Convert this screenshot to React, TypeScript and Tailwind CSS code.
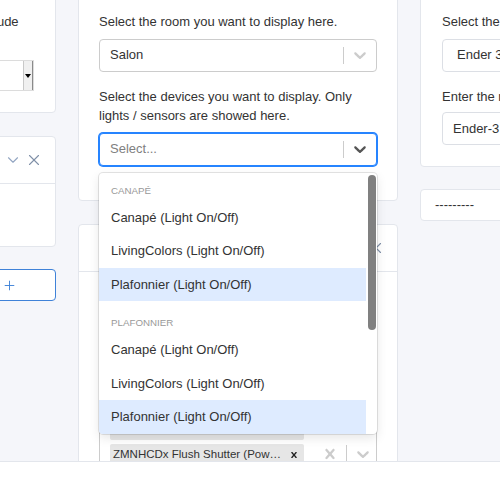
import { ChevronDown, X, Plus } from 'lucide-react';

const chevronPath =
  'M4.516 7.548c0.436-0.446 1.043-0.481 1.576 0l3.908 3.747 3.908-3.747c0.533-0.481 1.141-0.446 1.574 0 0.436 0.445 0.408 1.197 0 1.615-0.406 0.418-4.695 4.502-4.695 4.502-0.217 0.223-0.502 0.335-0.787 0.335s-0.57-0.112-0.789-0.335c0 0-4.287-4.084-4.695-4.502s-0.436-1.17 0-1.615z';
const crossPath =
  'M14.348 14.849c-0.469 0.469-1.229 0.469-1.697 0l-2.651-3.030-2.651 3.029c-0.469 0.469-1.229 0.469-1.697 0-0.469-0.469-0.469-1.229 0-1.697l2.758-3.15-2.759-3.152c-0.469-0.469-0.469-1.228 0-1.697s1.228-0.469 1.697 0l2.652 3.031 2.651-3.031c0.469-0.469 1.228-0.469 1.697 0s0.469 1.229 0 1.697l-2.758 3.152 2.758 3.15c0.469 0.469 0.469 1.229 0 1.698z';

function Glyph({ d, size = 20, className }: { d: string; size?: number; className?: string }) {
  return (
    <svg width={size} height={size} viewBox="0 0 20 20" className={className} fill="currentColor">
      <path d={d} />
    </svg>
  );
}

const groups = [
  { label: 'Canapé', options: ['Canapé (Light On/Off)', 'LivingColors (Light On/Off)', 'Plafonnier (Light On/Off)'] },
  { label: 'Plafonnier', options: ['Canapé (Light On/Off)', 'LivingColors (Light On/Off)', 'Plafonnier (Light On/Off)'] },
];

const selectedDevices = [
  'Canapé (Light On/Off)',
  'LivingColors (Light On/Off)',
  'Plafonnier (Light On/Off)',
  'Température Salon (Sensor)',
  'Humidité Salon (Sensor)',
  'Fibaro Motion Sensor (Motion)',
  'ZMNHCDx Flush Shutter (Power meter)',
];

function Card({ className = '', children }: { className?: string; children: React.ReactNode }) {
  return <div className={`rounded-[4px] border border-[#e3e6ec] bg-white ${className}`}>{children}</div>;
}

function SingleSelect({ value, focused = false }: { value?: string; focused?: boolean }) {
  return (
    <div
      className={`flex h-[33px] items-center rounded-[4px] bg-white ${
        focused ? 'border border-[#2684ff] shadow-[0_0_0_1px_#2684ff]' : 'border border-[#cccccc]'
      }`}
    >
      <div className="flex-1 pl-[10px]">
        {value ? <span className="text-[#333]">{value}</span> : <span className="text-[#808080]">Select...</span>}
      </div>
      <span className="h-[17px] w-px bg-[#cccccc]" />
      <div className={`flex w-[32px] justify-center ${focused ? 'text-[#555]' : 'text-[#cccccc]'}`}>
        <Glyph d={chevronPath} />
      </div>
    </div>
  );
}

function DeviceMenu() {
  return (
    <div className="absolute left-0 right-0 top-full z-10 mt-[7px] flex h-[261px] overflow-hidden rounded-[4px] bg-white shadow-[0_0_0_1px_rgba(0,0,0,0.1),0_4px_11px_rgba(0,0,0,0.1)]">
      <div className="flex-1 pt-[4px]">
        {groups.map((g) => (
          <div key={g.label} className="py-[8px]">
            <div className="mb-[4px] h-[12px] px-[12px] text-[9.75px] leading-[12px] font-medium uppercase text-[#999]">
              {g.label}
            </div>
            {g.options.map((o, i) => (
              <div
                key={o}
                className={`flex h-[33.5px] items-center px-[12px] text-[#333] ${i === 2 ? 'bg-[#deebff]' : ''}`}
              >
                {o}
              </div>
            ))}
          </div>
        ))}
      </div>
      <div className="w-[11px] pl-[2px] pt-[2px]">
        <div className="h-[155px] w-[8px] rounded-full bg-[#808080]" />
      </div>
    </div>
  );
}

function CardHeader() {
  return (
    <div className="flex h-[47px] items-center justify-end gap-[3px] border-b border-[#e3e6ec] pr-[12px]">
      <ChevronDown size={18} strokeWidth={1.5} className="text-[#93a6c2]" />
      <X size={18} strokeWidth={1.5} className="text-[#7f90a8]" />
    </div>
  );
}

export default function App() {
  return (
    <div className="flex h-[500px] w-[500px] flex-col overflow-hidden bg-[#f5f6fa] font-['Liberation_Sans',Arial,sans-serif] text-[13px] leading-[1.5] text-[#333]">
      <main className="flex-1 overflow-hidden">
        <div className="-mt-[10px] ml-[-264px] flex items-start gap-[22px]">
          {/* location column */}
          <div className="flex w-[320px] shrink-0 flex-col">
            <Card className="px-[20px] pb-[21px] pt-[21px]">
              <p>Select the city you want to use for the latitude and longitude.</p>
              <div className="mt-[9px] flex h-[31px] w-[277px] border border-[#dcdcdc] bg-white">
                <div className="flex-1 pl-[6px] leading-[29px]">Paris</div>
                <div className="flex w-[10px] items-center justify-center border-l border-r border-l-[#c8c8c8] border-r-[#8a8a8a] bg-[#f0f0f0]">
                  <span className="h-0 w-0 border-x-[3px] border-t-[4px] border-x-transparent border-t-black" />
                </div>
              </div>
            </Card>
            <Card className="mt-[23px]">
              <CardHeader />
              <div className="h-[62px]" />
            </Card>
            <button className="mt-[22px] flex h-[32px] items-center justify-end rounded-[4px] border border-[#3f82d8] bg-white pr-[38px] text-[#3f82d8]">
              <Plus size={15} strokeWidth={1.5} />
            </button>
          </div>

          {/* room column */}
          <div className="flex w-[320px] shrink-0 flex-col">
            <Card className="px-[20px] pb-[34px] pt-[21px]">
              <p>Select the room you want to display here.</p>
              <div className="mt-[7px]">
                <SingleSelect value="Salon" />
              </div>
              <p className="mt-[15px]">Select the devices you want to display. Only lights / sensors are showed here.</p>
              <div className="relative mt-[7px]">
                <SingleSelect focused />
                <DeviceMenu />
              </div>
            </Card>
            <Card className="mt-[23px] h-[300px]">
              <CardHeader />
              <div className="px-[20px] pt-[11px]">
                <div className="flex rounded-[4px] border border-[#cccccc] bg-white">
                  <div className="flex flex-1 flex-wrap px-[8px] py-[2px]">
                    {selectedDevices.map((d) => (
                      <div key={d} className="m-[2px] flex h-[22px] w-[194px] items-center rounded-[2px] bg-[#e6e6e6]">
                        <span className="flex-1 truncate pl-[3px] text-[11.5px] text-[#333]">{d}</span>
                        <span className="flex w-[20px] justify-center text-[#222]">
                          <Glyph d={crossPath} size={12} />
                        </span>
                      </div>
                    ))}
                  </div>
                  <div className="flex items-center self-end pb-[6px]">
                    <div className="flex w-[32px] justify-center text-[#cccccc]">
                      <Glyph d={crossPath} />
                    </div>
                    <span className="h-[17px] w-px bg-[#cccccc]" />
                    <div className="flex w-[32px] justify-center text-[#cccccc]">
                      <Glyph d={chevronPath} />
                    </div>
                  </div>
                </div>
              </div>
            </Card>
          </div>

          {/* printer column */}
          <div className="flex w-[320px] shrink-0 flex-col">
            <Card className="px-[21px] pb-[21px] pt-[21px]">
              <p>Select the printer you want to display here.</p>
              <div className="mt-[7px] flex h-[33px] items-center rounded-[4px] border border-[#dcdfe5] pl-[14px]">
                Ender 3 V2
              </div>
              <p className="mt-[15px]">Enter the name of the printer.</p>
              <div className="mt-[6px] flex h-[33px] items-center rounded-[4px] border border-[#dcdfe5] pl-[10px]">
                Ender-3 V2
              </div>
            </Card>
            <Card className="mt-[22px] flex h-[32px] items-center pl-[14px]">---------</Card>
          </div>
        </div>
      </main>
      <footer className="h-[39px] shrink-0 border-t border-[#e3e6ec] bg-white" />
    </div>
  );
}
